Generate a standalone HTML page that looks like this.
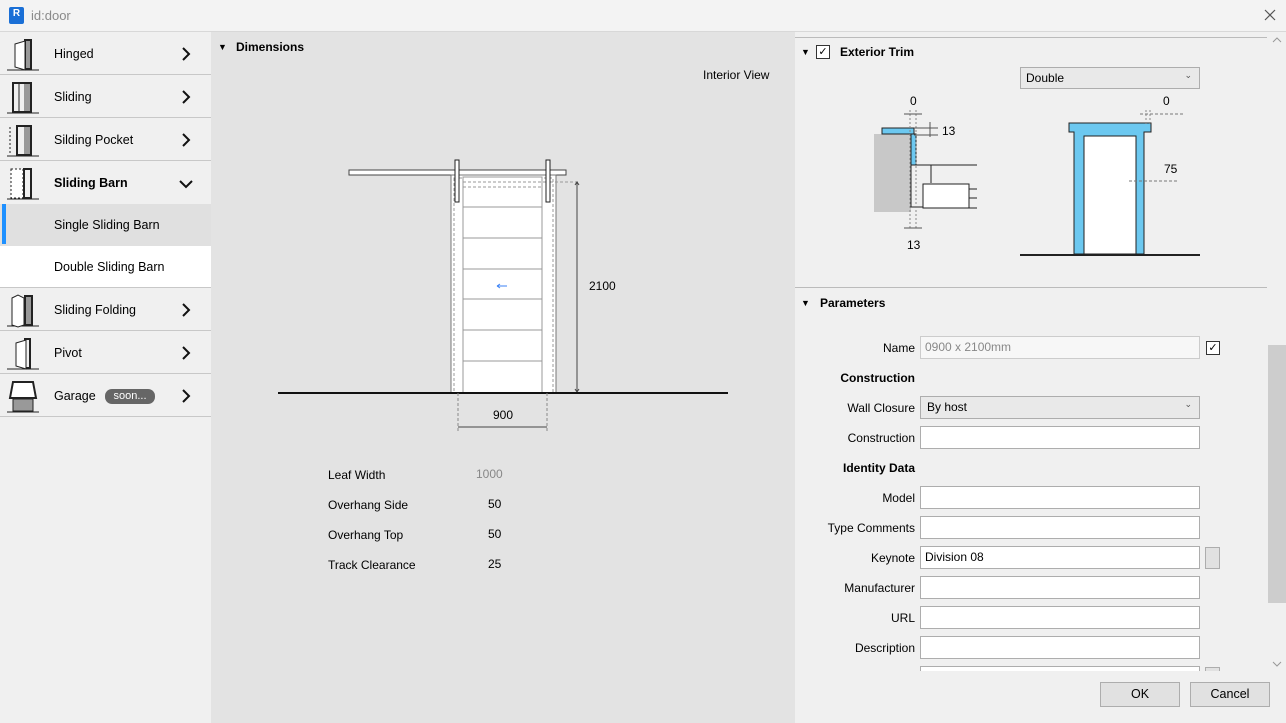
<!DOCTYPE html>
<html><head><meta charset="utf-8"><style>
*{margin:0;padding:0;box-sizing:border-box}
body{width:1286px;height:723px;overflow:hidden;font-family:"Segoe UI","Liberation Sans",sans-serif;font-size:12px;color:#000;background:#f0f0f0;position:relative}
.a{position:absolute}
.title{left:0;top:0;width:1286px;height:32px;background:#f3f3f3;border-bottom:1px solid #d8d8d8}
.side{left:0;top:32px;width:211px;height:691px;background:#f0f0f0}
.it{position:absolute;left:0;width:211px;height:43px;border-bottom:1px solid #c8c8c8;font-size:12.5px}
.it .t{position:absolute;left:54px;top:15px}
.it svg.c{position:absolute;left:181px;top:15px}
.center{left:211px;top:32px;width:584px;height:691px;background:#e3e3e3}
.right{left:795px;top:32px;width:491px;height:691px;background:#f0f0f0}
.lbl{position:absolute;text-align:right;width:120px;left:795px;font-size:12px}
.inp{position:absolute;left:920px;width:280px;height:23px;background:#fff;border:1px solid #adadad;font-size:12px;padding:3px 4px}
.btn{position:absolute;top:682px;width:80px;height:25px;background:#e1e1e1;border:1px solid #adadad;text-align:center;line-height:23px;font-size:12.5px}
</style></head><body>
<div class="a title"></div>
<div class="a" style="left:9px;top:7px;width:15px;height:17px;background:#1a6fd6;border-radius:2px;color:#fff;font-size:10px;font-weight:bold;text-align:center;line-height:13px">R</div>
<div class="a" style="left:31px;top:8px;font-size:13px;color:#8a8a8a">id:door</div>
<svg class="a" style="left:1264px;top:9px" width="12" height="12" stroke="#555" stroke-width="1.2"><path d="M1 1l10 10M11 1L1 11"/></svg>

<div class="a side">
 <div class="it" style="top:0"><span class="t">Hinged</span><svg class="c" width="10" height="14" fill="none" stroke="#111" stroke-width="2"><path d="M2 1l6 6-6 6"/></svg></div>
 <div class="it" style="top:43px"><span class="t">Sliding</span><svg class="c" width="10" height="14" fill="none" stroke="#111" stroke-width="2"><path d="M2 1l6 6-6 6"/></svg></div>
 <div class="it" style="top:86px"><span class="t">Silding Pocket</span><svg class="c" width="10" height="14" fill="none" stroke="#111" stroke-width="2"><path d="M2 1l6 6-6 6"/></svg></div>
 <div class="it" style="top:129px;border:none"><span class="t" style="font-weight:bold">Sliding Barn</span><svg class="c" style="left:179px;top:18px" width="14" height="10" fill="none" stroke="#111" stroke-width="2"><path d="M1 2l6 6 6-6"/></svg></div>
 <div class="it" style="top:172px;height:42px;background:#e0e0e0;border:none"><div class="a" style="left:2px;top:0;width:4px;height:40px;background:#1e90ff"></div><span class="t" style="top:14px">Single Sliding Barn</span></div>
 <div class="it" style="top:214px;height:42px;background:#fff"><span class="t" style="top:14px">Double Sliding Barn</span></div>
 <div class="it" style="top:256px"><span class="t">Sliding Folding</span><svg class="c" width="10" height="14" fill="none" stroke="#111" stroke-width="2"><path d="M2 1l6 6-6 6"/></svg></div>
 <div class="it" style="top:299px"><span class="t">Pivot</span><svg class="c" width="10" height="14" fill="none" stroke="#111" stroke-width="2"><path d="M2 1l6 6-6 6"/></svg></div>
 <div class="it" style="top:342px"><span class="t">Garage</span><svg class="c" width="10" height="14" fill="none" stroke="#111" stroke-width="2"><path d="M2 1l6 6-6 6"/></svg><span class="a" style="left:105px;top:15px;width:50px;height:15px;background:#666;color:#fff;border-radius:7px;font-size:11px;text-align:center;line-height:14px">soon...</span></div>
</div>
<svg class="a" style="left:0;top:32px" width="211" height="391" fill="none" stroke="#222">
 <g><path d="M7 38h32"/><rect x="25" y="8" width="6" height="29" fill="#999" stroke="#222" stroke-width="2"/><path d="M15 12l10-3v29l-10-3z" fill="#fff"/></g>
 <g transform="translate(0,43)"><path d="M7 38h32"/><rect x="13" y="8" width="18" height="29" stroke-width="2"/><rect x="24" y="9" width="6" height="27" fill="#999" stroke="none"/><path d="M19 9v27"/></g>
 <g transform="translate(0,86)"><path d="M7 38h32"/><path d="M10 9v27" stroke-dasharray="2 2"/><rect x="17" y="8" width="14" height="29" stroke-width="2"/><rect x="24" y="9" width="6" height="27" fill="#999" stroke="none"/></g>
 <g transform="translate(0,129)"><path d="M7 38h32"/><rect x="11" y="8" width="12" height="29" stroke-dasharray="2 2" fill="#fff"/><rect x="24" y="8" width="7" height="29" stroke-width="2"/></g>
 <g transform="translate(0,256)"><path d="M7 38h32"/><path d="M12 10l6-3 6 3v27l-6 2-6-2z" fill="#fff"/><rect x="25" y="8" width="7" height="29" fill="#999" stroke-width="2"/></g>
 <g transform="translate(0,299)"><path d="M7 38h32"/><rect x="25" y="8" width="5" height="29" stroke-width="2"/><path d="M16 12l10-3v29l-10-3z" fill="#fff"/></g>
 <g transform="translate(0,342)"><path d="M7 38h32"/><path d="M13 8h20l3 16H10z" fill="#fff" stroke-width="2"/><rect x="13" y="25" width="20" height="12" fill="#999"/></g>
</svg>

<div class="a center"></div>
<div class="a" style="left:218px;top:42px;font-size:9px">▼</div>
<div class="a" style="left:236px;top:40px;font-weight:bold">Dimensions</div>
<div class="a" style="left:703px;top:68px">Interior View</div>
<svg class="a" style="left:211px;top:32px" width="584" height="420" fill="none" stroke="#555">
 <g transform="translate(-211,-32)">
 <rect x="349" y="170" width="217" height="5" fill="#fff" stroke="#444"/>
 <rect x="451" y="175" width="105" height="218" fill="#fff" stroke="#777"/>
 <rect x="454" y="178" width="99" height="215" fill="#fff" stroke="#999" stroke-dasharray="3 2"/>
 <rect x="463" y="177" width="79" height="216" fill="#fff" stroke="#999"/>
 <path d="M463 207h79M463 238h79M463 269h79M463 299h79M463 330h79M463 361h79" stroke="#999"/>
 <path d="M463 182h82M463 187h79M545 182h35" stroke="#999" stroke-dasharray="3 2"/>
 <rect x="455" y="160" width="4" height="42" fill="#fff" stroke="#222"/>
 <rect x="546" y="160" width="4" height="42" fill="#fff" stroke="#222"/>
 <path d="M507 286h-10m0 0l3-2m-3 2l3 2" stroke="#3b82f6"/>
 <path d="M577 182v210M575 185l2-3 2 3M575 389l2 3 2-3" stroke="#444"/>
 <path d="M278 393h450" stroke="#111" stroke-width="2"/>
 <path d="M458 393v40M547 393v40" stroke="#888" stroke-dasharray="3 2"/>
 <path d="M458 427h89" stroke="#444"/>
 </g>
</svg>
<div class="a" style="left:589px;top:279px">2100</div>
<div class="a" style="left:493px;top:408px">900</div>
<div class="a" style="left:328px;top:468px">Leaf Width</div><div class="a" style="left:476px;top:467px;color:#888">1000</div>
<div class="a" style="left:328px;top:498px">Overhang Side</div><div class="a" style="left:488px;top:497px">50</div>
<div class="a" style="left:328px;top:528px">Overhang Top</div><div class="a" style="left:488px;top:527px">50</div>
<div class="a" style="left:328px;top:558px">Track Clearance</div><div class="a" style="left:488px;top:557px">25</div>

<div class="a right"></div>
<div class="a" style="left:795px;top:37px;width:472px;height:1px;background:#bbb"></div>
<div class="a" style="left:795px;top:287px;width:472px;height:1px;background:#bbb"></div>
<div class="a" style="left:1268px;top:345px;width:18px;height:258px;background:#cdcdcd"></div>
<svg class="a" style="left:1272px;top:36px" width="10" height="8" fill="none" stroke="#999"><path d="M1 6l4-4 4 4"/></svg>
<svg class="a" style="left:1272px;top:660px" width="10" height="8" fill="none" stroke="#999"><path d="M1 2l4 4 4-4"/></svg>
<div class="a" style="left:801px;top:47px;font-size:9px">▼</div>
<div class="a" style="left:816px;top:45px;width:14px;height:14px;border:1px solid #333;background:#fff;font-size:11px;line-height:12px;text-align:center">✓</div>
<div class="a" style="left:840px;top:45px;font-weight:bold">Exterior Trim</div>
<div class="a" style="left:1020px;top:67px;width:180px;height:22px;border:1px solid #adadad;background:#e9e9e9;padding:3px 5px">Double<span style="position:absolute;right:7px;top:2px;font-size:9px;color:#555">⌄</span></div>
<svg class="a" style="left:795px;top:32px" width="491" height="240" fill="none" stroke="#222">
 <g transform="translate(-795,-32)">
 <rect x="874" y="134" width="37" height="78" fill="#c8c8c8" stroke="none"/>
 <rect x="882" y="128" width="32" height="6" fill="#6cc8f0"/>
 <rect x="911" y="134" width="5" height="31" fill="#6cc8f0"/>
 <path d="M911 165h66M911 165v42h12M916 165h15v18" />
 <rect x="923" y="184" width="46" height="24" fill="#fff"/>
 <path d="M969 189h8M969 198h8M969 208h8"/>
 <path d="M910 110v120M916 110v120" stroke="#888" stroke-dasharray="2 2"/>
 <path d="M904 114h18M904 228h18M914 128h24M914 135h24" stroke="#555"/>
 <path d="M930 122v15" stroke="#555"/>
 <path d="M1069 123h82v9h-7v122h-9V136h-51v118h-10V132h-5z" fill="#6cc8f0"/>
 <rect x="1084" y="136" width="52" height="118" fill="#fff"/>
 <path d="M1020 255h180" stroke-width="2"/>
 <path d="M1146 110v16M1150 110v16" stroke="#888" stroke-dasharray="2 2"/>
 <path d="M1140 114h43M1129 181h48" stroke="#777" stroke-dasharray="3 2"/>
 </g>
</svg>
<div class="a" style="left:910px;top:94px">0</div>
<div class="a" style="left:942px;top:124px">13</div>
<div class="a" style="left:907px;top:238px">13</div>
<div class="a" style="left:1163px;top:94px">0</div>
<div class="a" style="left:1164px;top:162px">75</div>

<div class="a" style="left:801px;top:298px;font-size:9px">▼</div>
<div class="a" style="left:820px;top:296px;font-weight:bold">Parameters</div>
<div class="lbl" style="top:341px">Name</div>
<div class="inp" style="top:336px;background:#f7f7f7;border-color:#ccc;color:#888">0900 x 2100mm</div>
<div class="a" style="left:1206px;top:341px;width:14px;height:14px;border:1px solid #333;background:#fff;font-size:11px;line-height:12px;text-align:center">✓</div>
<div class="lbl" style="top:371px;font-weight:bold">Construction</div>
<div class="lbl" style="top:401px">Wall Closure</div>
<div class="inp" style="top:396px;background:#e9e9e9;padding-left:6px">By host<span style="position:absolute;right:7px;top:2px;font-size:9px;color:#555">⌄</span></div>
<div class="lbl" style="top:431px">Construction</div><div class="inp" style="top:426px"></div>
<div class="lbl" style="top:461px;font-weight:bold">Identity Data</div>
<div class="lbl" style="top:491px">Model</div><div class="inp" style="top:486px"></div>
<div class="lbl" style="top:521px">Type Comments</div><div class="inp" style="top:516px"></div>
<div class="lbl" style="top:551px">Keynote</div><div class="inp" style="top:546px">Division 08</div>
<div class="a" style="left:1205px;top:547px;width:15px;height:22px;background:#e1e1e1;border:1px solid #adadad"></div>
<div class="lbl" style="top:581px">Manufacturer</div><div class="inp" style="top:576px"></div>
<div class="lbl" style="top:611px">URL</div><div class="inp" style="top:606px"></div>
<div class="lbl" style="top:641px">Description</div><div class="inp" style="top:636px"></div>
<div class="inp" style="top:666px;height:5px;border-bottom:none"></div>
<div class="a" style="left:1205px;top:667px;width:15px;height:4px;background:#e1e1e1;border:1px solid #adadad;border-bottom:none"></div>
<div class="a" style="left:795px;top:671px;width:473px;height:52px;background:#f0f0f0"></div>
<div class="btn" style="left:1100px">OK</div>
<div class="btn" style="left:1190px">Cancel</div>
</body></html>
